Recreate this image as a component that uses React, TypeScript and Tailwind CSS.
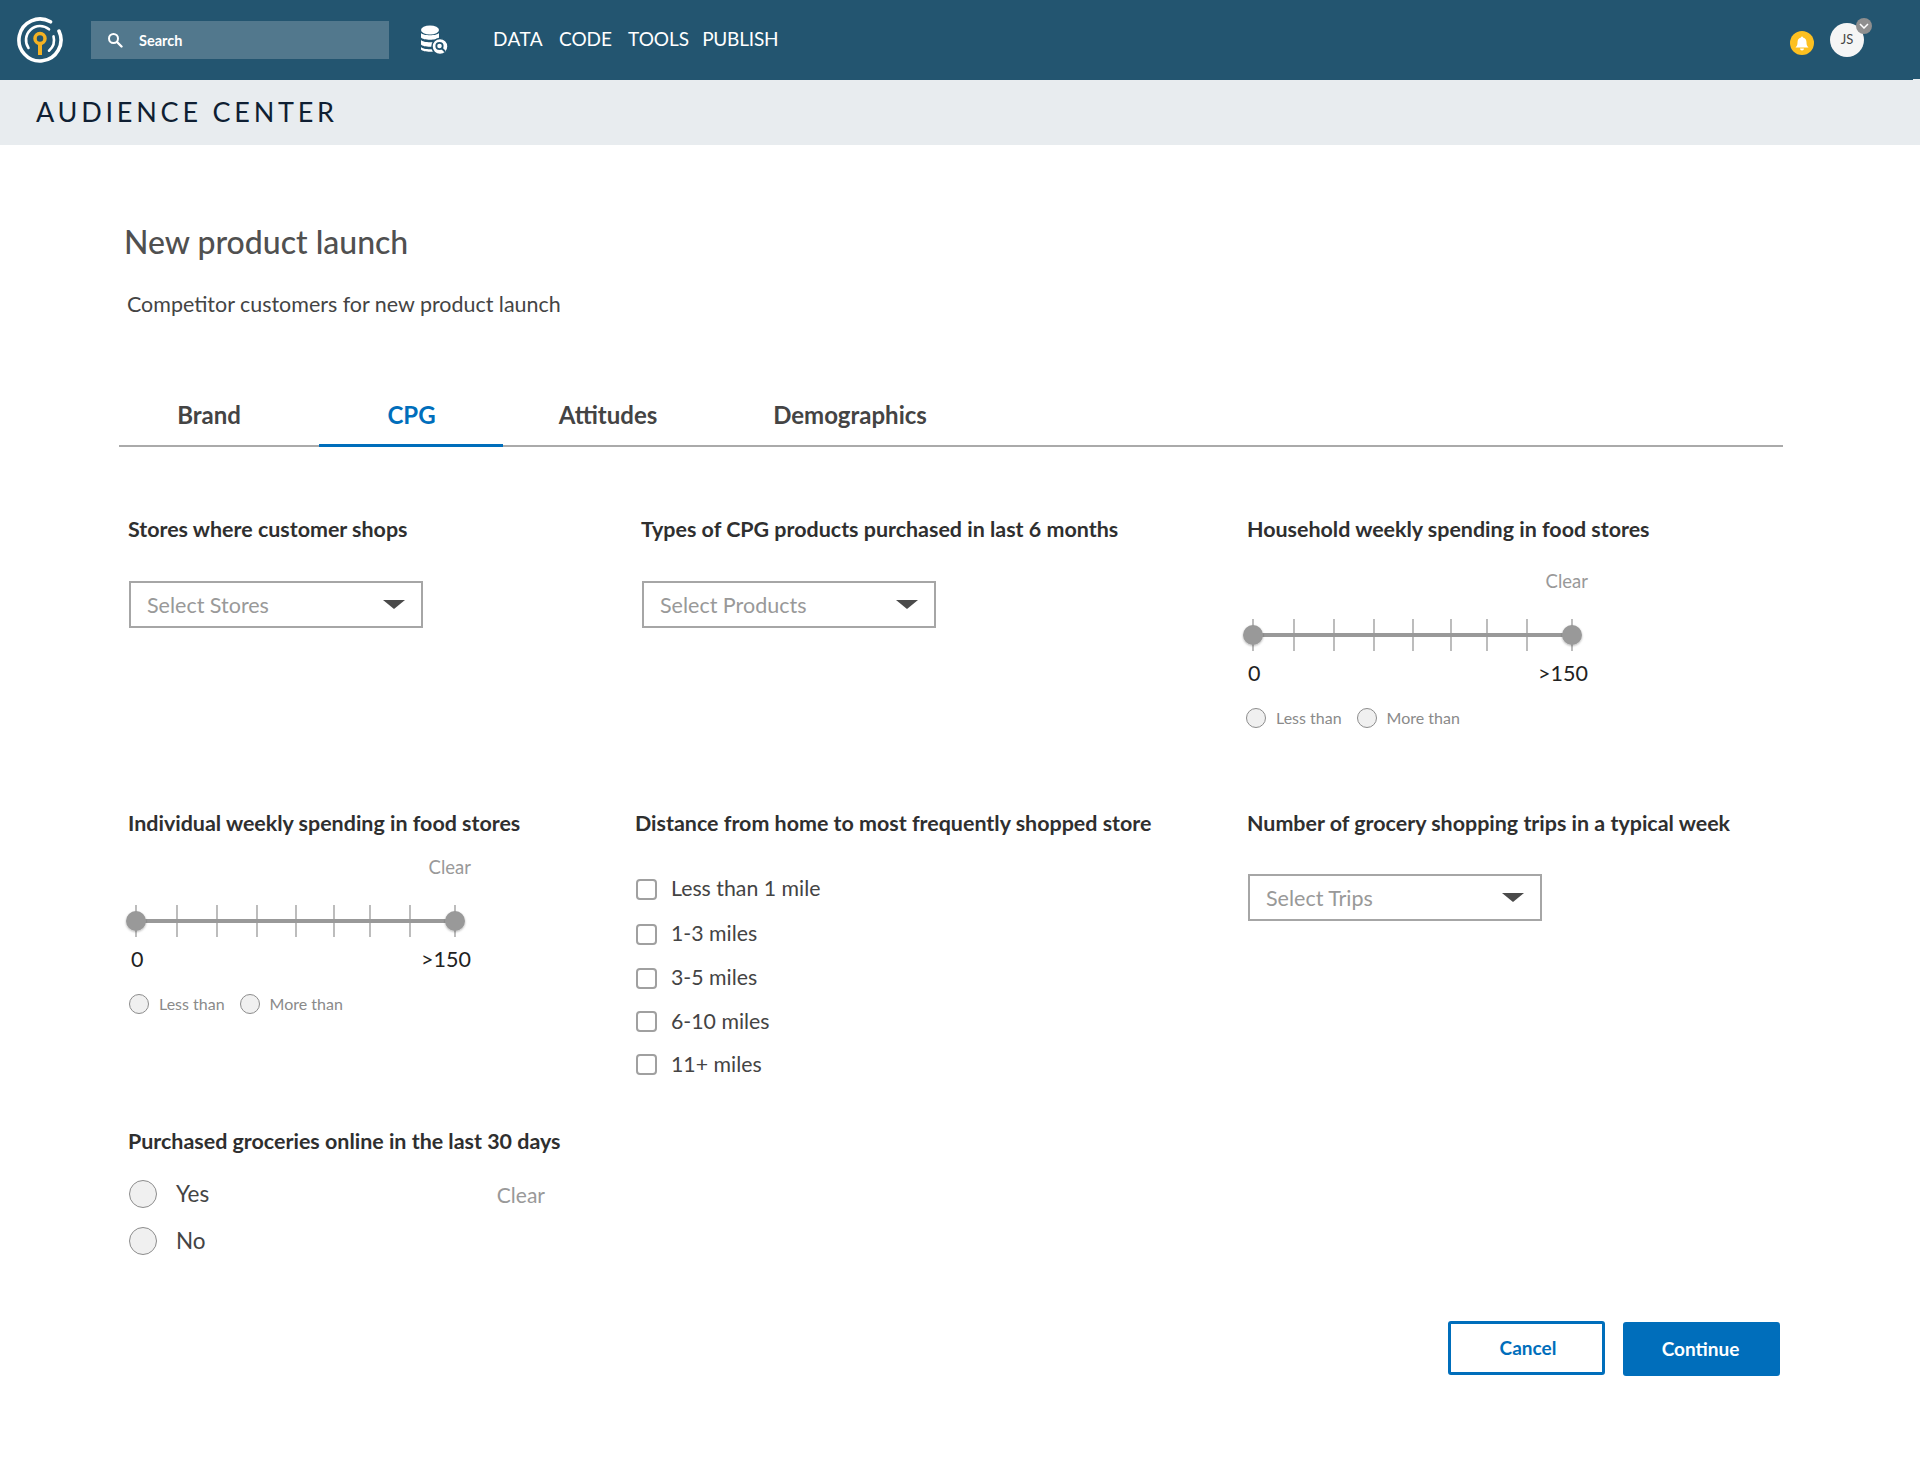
import React from 'react';

const Logo = () => (
    <svg width="48" height="48" viewBox="0 0 48 48" fill="none">
        <path d="M34.500 5.800A21 21 0 1 0 43 15.100" stroke="#fff" strokeWidth="3.600" strokeLinecap="round" />
        <path d="M12.500 32A14 14 0 0 1 33 13.300" stroke="#fff" strokeWidth="2.600" strokeLinecap="round" />
        <path d="M37.500 20.400A14 14 0 0 1 33 34.700" stroke="#fff" strokeWidth="2.600" strokeLinecap="round" />
        <circle cx="24" cy="22.500" r="5" stroke="#f4b223" strokeWidth="3.500" />
        <rect x="22" y="27" width="4" height="12" fill="#f4b223" />
    </svg>
);

const SearchIcon = () => (
    <svg width="16" height="16" viewBox="0 0 16 16" fill="none">
        <circle cx="6.500" cy="6.500" r="4.500" stroke="#fff" strokeWidth="2" />
        <path d="M10 10l4.500 4.500" stroke="#fff" strokeWidth="2.400" strokeLinecap="round" />
    </svg>
);

const DataSearchIcon = () => (
    <svg width="28" height="30" viewBox="0 0 28 30" fill="none">
        <ellipse cx="10" cy="5" rx="9" ry="4.500" fill="#fff" />
        <path d="M1 8c2 3 16 3 18 0v4.500c-2 3-16 3-18 0z" fill="#fff" />
        <path d="M1 15c2 3 16 3 18 0v4.500c-2 3-16 3-18 0z" fill="#fff" />
        <path d="M1 22c2 3 16 3 18 0v2.500c-2 3-16 3-18 0z" fill="#fff" />
        <circle cx="20" cy="21.500" r="8" fill="#fff" stroke="#235570" strokeWidth="1.500" />
        <circle cx="19.500" cy="21" r="3.200" stroke="#235570" strokeWidth="1.800" />
        <path d="M22 23.500l2.500 2.500" stroke="#235570" strokeWidth="1.800" strokeLinecap="round" />
    </svg>
);

const BellIcon = () => (
    <svg width="16" height="17" viewBox="0 0 16 17" fill="#fff">
        <path d="M8 1.500a1 1 0 0 1 1 1c2.500.5 3.500 2.500 3.500 5 0 2.500.7 3.800 2 5H1.500c1.300-1.200 2-2.500 2-5 0-2.500 1-4.500 3.500-5a1 1 0 0 1 1-1z" />
        <path d="M6 13.500h4a2 2 0 0 1-4 0z" />
    </svg>
);

const Caret = () => (
    <svg width="22" height="9" viewBox="0 0 22 9">
        <path d="M0 0h22L11 9z" fill="#4a4a4a" />
    </svg>
);

const Select = ({ label }: { label: string }) => (
    <div className="flex h-[47px] w-[294px] items-center justify-between border-2 border-[#a6a6a6] bg-white pl-[16px] pr-[16px]">
        <span className="translate-y-[1px] text-[21.500px] text-[#999999]">{label}</span>
        <Caret />
    </div>
);

const TICKS = [53, 93, 133, 172, 210, 246, 286];

const RangeSlider = () => (
    <svg width="352" height="34" viewBox="0 0 352 34" className="block">
        <defs>
            <filter id="thumb-shadow" x="-30%" y="-30%" width="160%" height="160%">
                <feDropShadow dx="0" dy="1" stdDeviation="1" floodOpacity="0.3" />
            </filter>
        </defs>
        <line x1="12" y1="1" x2="12" y2="33" stroke="#999" strokeWidth="1.300" />
        <line x1="331" y1="1" x2="331" y2="33" stroke="#999" strokeWidth="1.300" />
        {TICKS.map((x) => (
            <line key={x} x1={x} y1="1" x2={x} y2="33" stroke="#999" strokeWidth="1.300" />
        ))}
        <line x1="12" y1="17" x2="331" y2="17" stroke="#999" strokeWidth="4" />
        <circle cx="12" cy="17" r="10" fill="#999" filter="url(#thumb-shadow)" />
        <circle cx="331" cy="17" r="10" fill="#999" filter="url(#thumb-shadow)" />
    </svg>
);

const SmallRadio = ({ label }: { label: string }) => (
    <div className="flex items-center gap-[10px]">
        <span className="h-[20px] w-[20px] rounded-full border border-[#8c8c8c] bg-[#f0f0f0]" />
        <span className="text-[16px] leading-none text-[#8a8a8a]">{label}</span>
    </div>
);

const SpendingSlider = () => (
    <div className="w-[352px]">
        <div className="flex w-[347px] justify-end text-[18.500px] leading-[24px] text-[#999999]">Clear</div>
        <div className="mt-[25px]">
            <RangeSlider />
        </div>
        <div className="mt-[7px] flex w-[347px] justify-between pl-[7px] text-[21.500px] leading-[28px] text-[#222222]">
            <span>0</span>
            <span>&gt;150</span>
        </div>
        <div className="mt-[21px] flex gap-[15px] pl-[5px] leading-none">
            <SmallRadio label="Less than" />
            <SmallRadio label="More than" />
        </div>
    </div>
);

const Heading = ({ children }: { children: React.ReactNode }) => (
    <h3 className="text-[21.450px] leading-[26px] font-bold text-[#2f2f2f]">{children}</h3>
);

const MILES = [
    { label: 'Less than 1 mile', cls: 'h-[46px]' },
    { label: '1-3 miles', cls: 'h-[44px]' },
    { label: '3-5 miles', cls: 'h-[44px]' },
    { label: '6-10 miles', cls: 'h-[43px]' },
    { label: '11+ miles', cls: 'h-[43px]' },
];

export default function App() {
    return (
        <div className="min-h-[1468px] bg-white font-['Lato',sans-serif]">
            {/* Top nav */}
            <header className="relative flex h-[80px] items-center bg-[#235570] pl-[16px] pr-[56px]">
                <div className="-mt-[1px]">
                    <Logo />
                </div>
                <div className="ml-[27px] flex h-[38px] w-[298px] items-center bg-[#52788d] pl-[16px]">
                    <SearchIcon />
                    <span className="ml-[16px] translate-y-[1px] text-[14.500px] font-bold text-white">Search</span>
                </div>
                <div className="ml-[31px]">
                    <DataSearchIcon />
                </div>
                <nav className="ml-[45px] flex text-[19px] leading-none text-white -translate-y-[2px]">
                    <span className="tracking-[0.400px]">DATA</span>
                    <span className="ml-[16px]">CODE</span>
                    <span className="ml-[16px]">TOOLS</span>
                    <span className="ml-[13px] tracking-[-0.200px]">PUBLISH</span>
                </nav>
                <div className="ml-auto flex items-center">
                    <div className="mt-[6px] flex h-[24px] w-[24px] items-center justify-center rounded-full bg-[#fdc020]">
                        <BellIcon />
                    </div>
                    <div className="relative ml-[16px] flex h-[34px] w-[34px] items-center justify-center rounded-full bg-[#f5f5f5] text-[13px] text-[#444444]">
                        JS
                        <span className="absolute -right-[8px] -top-[5px] flex h-[16px] w-[16px] items-center justify-center rounded-full bg-[#8f8f8f]">
                            <svg width="10" height="6" viewBox="0 0 10 6" fill="none">
                                <path d="M1 1l4 4 4-4" stroke="#fff" strokeWidth="1.500" />
                            </svg>
                        </span>
                    </div>
                </div>
                <span className="absolute bottom-0 right-0 h-[1.500px] w-[7px] bg-[#e8ecef]" />
            </header>

            <div className="flex h-[65px] items-center bg-[#e8ecef] pl-[36px]">
                <h1 className="-translate-y-[1px] text-[27px] leading-none tracking-[3.770px] text-[#0f1f33]">AUDIENCE CENTER</h1>
            </div>

            <main className="pl-[119px]">
                <h2 className="mt-[77px] pl-[5px] text-[32px] leading-[40px] font-medium text-[#505050]">New product launch</h2>
                <p className="mt-[29px] pl-[8px] text-[21.450px] leading-[26px] text-[#444444]">Competitor customers for new product launch</p>

                {/* Tabs */}
                <div className="mt-[65px] flex h-[65px] w-[1664px] border-b-2 border-[#aaaaaa] text-[24px] font-bold">
                    <div className="flex w-[200px] items-center justify-center pr-[20px] pt-[2px] text-[#444444]">Brand</div>
                    <div className="-mb-[2px] flex w-[184px] items-center justify-center border-b-[3px] border-[#006ebb] pl-[1px] pt-[3px] text-[#006ebb]">CPG</div>
                    <div className="flex w-[210px] items-center justify-center pt-[2px] text-[#444444]">Attitudes</div>
                    <div className="flex w-[274px] items-center justify-center pt-[2px] text-[#444444]">Demographics</div>
                </div>

                <div className="mt-[69px] grid grid-cols-[516px_612px_1fr] grid-rows-[294px_318px_auto]">
                    {/* Row 1 */}
                    <div className="pl-[9px]">
                        <Heading>Stores where customer shops</Heading>
                        <div className="mt-[39px] pl-[1px]">
                            <Select label="Select Stores" />
                        </div>
                    </div>
                    <div className="pl-[6px]">
                        <Heading>Types of CPG products purchased in last 6 months</Heading>
                        <div className="mt-[39px] pl-[1px]">
                            <Select label="Select Products" />
                        </div>
                    </div>
                    <div>
                        <Heading>Household weekly spending in food stores</Heading>
                        <div className="-ml-[6px] mt-[27px]">
                            <SpendingSlider />
                        </div>
                    </div>

                    {/* Row 2 */}
                    <div className="pl-[9px]">
                        <Heading>Individual weekly spending in food stores</Heading>
                        <div className="-ml-[4px] mt-[19px]">
                            <SpendingSlider />
                        </div>
                    </div>
                    <div>
                        <Heading>Distance from home to most frequently shopped store</Heading>
                        <div className="mt-[30px]">
                            {MILES.map((m) => (
                                <div key={m.label} className={`flex items-center gap-[14px] ${m.cls}`}>
                                    <span className="ml-[1px] h-[21px] w-[21px] rounded-[4px] border-2 border-[#a0a0a0] bg-white" />
                                    <span className="text-[21.300px] leading-none text-[#444444]">{m.label}</span>
                                </div>
                            ))}
                        </div>
                    </div>
                    <div>
                        <Heading>Number of grocery shopping trips in a typical week</Heading>
                        <div className="mt-[38px] pl-[1px]">
                            <Select label="Select Trips" />
                        </div>
                    </div>

                    {/* Row 3 */}
                    <div className="pl-[9px]">
                        <Heading>Purchased groceries online in the last 30 days</Heading>
                        <div className="mt-[26px] flex w-[417px] items-start justify-between">
                            <div className="flex flex-col gap-[19px] pl-[1px]">
                                <div className="flex h-[28px] items-center gap-[19px]">
                                    <span className="h-[28px] w-[28px] rounded-full border-[1.500px] border-[#8c8c8c] bg-[#f0f0f0]" />
                                    <span className="text-[22.500px] leading-none text-[#444444]">Yes</span>
                                </div>
                                <div className="flex h-[28px] items-center gap-[19px]">
                                    <span className="h-[28px] w-[28px] rounded-full border-[1.500px] border-[#8c8c8c] bg-[#f0f0f0]" />
                                    <span className="text-[22.500px] leading-none text-[#444444]">No</span>
                                </div>
                            </div>
                            <span className="mt-[1px] text-[21px] leading-[28px] text-[#999999]">Clear</span>
                        </div>
                    </div>
                </div>

                {/* Actions */}
                <div className="mt-[66px] flex w-[1661px] items-start justify-end gap-[18px] text-[19px] font-bold">
                    <button className="h-[54px] w-[157px] rounded-[3px] border-[3px] border-[#006ebb] bg-white pl-[3px] text-[#006ebb]">Cancel</button>
                    <button className="mt-[1px] h-[54px] w-[157px] rounded-[3px] bg-[#006ebb] pr-[2px] text-white">Continue</button>
                </div>
            </main>
        </div>
    );
}
